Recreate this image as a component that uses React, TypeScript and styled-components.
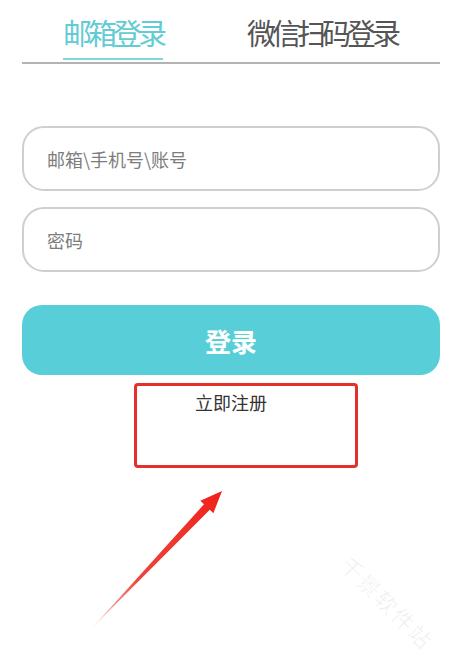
import React from "react";
import styled, { createGlobalStyle } from "styled-components";

const GlobalStyle = createGlobalStyle`
  body {
    margin: 0;
    background: #ffffff;
    font-family: "Noto Sans CJK SC", "Noto Sans", sans-serif;
  }
`;

const Page = styled.div`
  position: relative;
  width: 453px;
  height: 661px;
  overflow: hidden;
  background: #ffffff;
`;

const Form = styled.div`
  width: 418px;
  margin-left: 22px;
  display: flex;
  flex-direction: column;
`;

const Tabs = styled.div`
  display: flex;
  gap: 84px;
  padding: 14px 0 0 41px;
  border-bottom: 2px solid #b3b3b3;
`;

const Tab = styled.div<{ $active?: boolean }>`
  font-size: 29px;
  line-height: 36px;
  letter-spacing: -4px;
  color: ${(p) => (p.$active ? "#62cbd3" : "#555555")};
  padding-bottom: 8px;
  border-bottom: 2px solid ${(p) => (p.$active ? "#7fd6dc" : "transparent")};
  margin-bottom: 2px;
`;

const Fields = styled.div`
  display: flex;
  flex-direction: column;
  gap: 16px;
  margin-top: 62px;
`;

const Field = styled.input`
  box-sizing: border-box;
  width: 100%;
  height: 65px;
  border: 2px solid #cfcfcf;
  border-radius: 22px;
  padding: 0 0 0 23px;
  font-family: inherit;
  font-size: 18px;
  outline: none;
  background: #ffffff;

  &::placeholder {
    color: #7d7d7d;
  }
`;

const LoginButton = styled.button`
  margin-top: 33px;
  height: 70px;
  border: none;
  border-radius: 20px;
  background: #58cfd8;
  color: #ffffff;
  font-family: inherit;
  font-size: 26px;
  font-weight: 700;
  cursor: pointer;
`;

const RegisterLink = styled.div`
  margin-top: 16px;
  text-align: center;
  font-size: 18px;
  line-height: 22px;
  color: #333333;
`;

const Highlight = styled.div`
  position: absolute;
  left: 134px;
  top: 383px;
  width: 224px;
  height: 85px;
  box-sizing: border-box;
  border: 3px solid #e3302a;
  border-radius: 4px;
`;

const ArrowLayer = styled.svg`
  position: absolute;
  left: 0;
  top: 0;
  pointer-events: none;
`;

const Watermark = styled.div`
  position: absolute;
  left: 326px;
  top: 586px;
  width: 124px;
  text-align: center;
  font-size: 22px;
  letter-spacing: 2px;
  color: rgba(0, 0, 0, 0.06);
  transform: rotate(45deg);
  pointer-events: none;
`;

export default function App() {
  return (
    <Page>
      <GlobalStyle />
      <Form>
        <Tabs>
          <Tab $active>邮箱登录</Tab>
          <Tab>微信扫码登录</Tab>
        </Tabs>
        <Fields>
          <Field placeholder="邮箱\手机号\账号" />
          <Field type="password" placeholder="密码" />
        </Fields>
        <LoginButton>登录</LoginButton>
        <RegisterLink>立即注册</RegisterLink>
      </Form>

      <Highlight />
      <ArrowLayer width="453" height="661" viewBox="0 0 453 661">
        <defs>
          <linearGradient id="arrowFade" x1="92" y1="628" x2="222" y2="491" gradientUnits="userSpaceOnUse">
            <stop offset="0" stopColor="#e8261c" stopOpacity="0.15" />
            <stop offset="0.35" stopColor="#e8261c" stopOpacity="0.85" />
            <stop offset="1" stopColor="#f0211a" />
          </linearGradient>
        </defs>
        <polygon
          points="92,628 209.8,509.7 213.4,513.2 222,491 200.3,500.8 204,504.3"
          fill="url(#arrowFade)"
        />
      </ArrowLayer>
      <Watermark>千景软件站</Watermark>
    </Page>
  );
}
